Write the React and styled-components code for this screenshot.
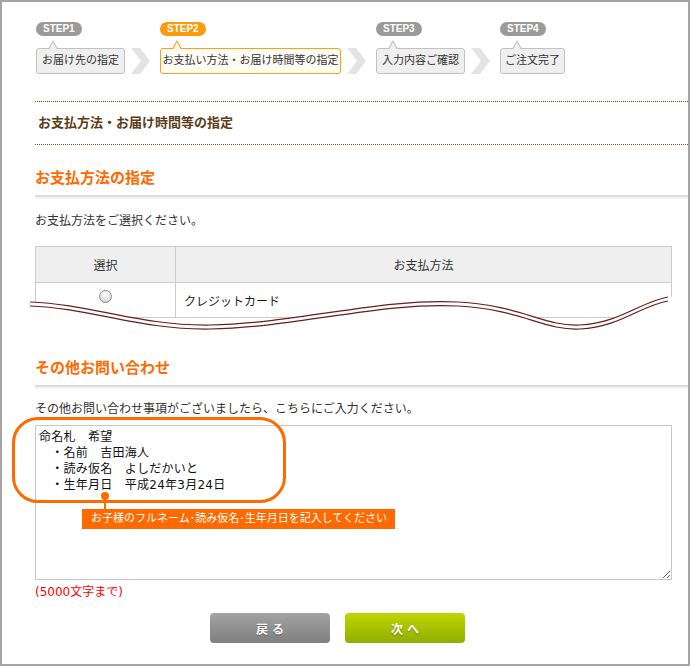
import React from "react";
import styled, { createGlobalStyle } from "styled-components";

const GlobalStyle = createGlobalStyle`
  body {
    margin: 0;
    font-family: "DejaVu Sans", "Noto Sans CJK JP", sans-serif;
    color: #333;
    background: #fff;
  }
`;

const steps = [
  { label: "STEP1", text: "お届け先の指定", width: 89 },
  { label: "STEP2", text: "お支払い方法・お届け時間等の指定", width: 181, active: true },
  { label: "STEP3", text: "入力内容ご確認", width: 89 },
  { label: "STEP4", text: "ご注文完了", width: 65 },
];

const noteText = "命名札　希望\n　・名前　吉田海人\n　・読み仮名　よしだかいと\n　・生年月日　平成24年3月24日";

function Chevron() {
  return (
    <ChevronBox>
      <svg width="19" height="26" viewBox="0 0 19 26">
        <polygon points="0,0 9,0 19,13 9,26 0,26 10,13" fill="#e3e3e3" />
      </svg>
    </ChevronBox>
  );
}

function Wave() {
  const upper = "M30,302 C90,304 140,326 210,325 C300,323 380,298 458,302 C520,305 545,327 580,325 C620,323 640,302 668,297";
  const lower = "M30,306 C90,308 140,330 210,329 C300,327 380,302 458,306 C520,309 545,331 580,329 C620,327 640,306 668,301";
  return (
    <WaveSvg width="650" height="50" viewBox="28 286 650 50">
      <path d={upper + " L678,296 L678,336 L28,336 Z"} fill="#fff" />
      <path d={upper} fill="none" stroke="#6b1c1c" strokeWidth="1.2" />
      <path d={lower} fill="none" stroke="#6b1c1c" strokeWidth="1.2" />
    </WaveSvg>
  );
}

export default function App() {
  return (
    <>
      <GlobalStyle />
      <Frame>
        <StepsRow>
          {steps.map((s, i) => (
            <React.Fragment key={s.label}>
              {i > 0 && <Chevron />}
              <Step>
                <Pill $active={s.active}>{s.label}</Pill>
                <StepBox $active={s.active} $width={s.width}>{s.text}</StepBox>
              </Step>
            </React.Fragment>
          ))}
        </StepsRow>

        <PageTitle>お支払方法・お届け時間等の指定</PageTitle>

        <SectionHeading>お支払方法の指定</SectionHeading>
        <Lead>お支払方法をご選択ください。</Lead>

        <TableWrap>
          <PayTable>
            <thead>
              <tr>
                <Th $w={139}>選択</Th>
                <Th>お支払方法</Th>
              </tr>
            </thead>
            <tbody>
              <tr>
                <Td $center>
                  <Radio />
                </Td>
                <Td>クレジットカード</Td>
              </tr>
            </tbody>
          </PayTable>
          <Wave />
        </TableWrap>

        <SectionHeading $top={39}>その他お問い合わせ</SectionHeading>
        <Lead $top={13}>その他お問い合わせ事項がございましたら、こちらにご入力ください。</Lead>

        <NoteWrap>
          <NoteArea readOnly value={noteText} />
          <Highlight />
          <Stem />
          <Dot />
          <Callout>お子様のフルネーム･読み仮名･生年月日を記入してください</Callout>
        </NoteWrap>
        <Limit>(5000文字まで)</Limit>

        <ButtonRow>
          <Button $variant="back">戻る</Button>
          <Button $variant="next">次へ</Button>
        </ButtonRow>
      </Frame>
    </>
  );
}

const Frame = styled.div`
  width: 690px;
  height: 666px;
  box-sizing: border-box;
  border: 2px solid #a4a4a4;
  padding: 20px 0 0 33px;
  overflow: hidden;
`;

const StepsRow = styled.div`
  display: flex;
  align-items: flex-end;
  margin-left: 1px;
`;

const Step = styled.div`
  display: flex;
  flex-direction: column;
  align-items: flex-start;
`;

const Pill = styled.div`
  height: 14px;
  line-height: 14px;
  padding: 0 7px;
  min-width: 31px;
  border-radius: 7px;
  background: ${(p) => (p.$active ? "#f99b0c" : "#9a9a9a")};
  color: #fff;
  font-family: "Liberation Sans", sans-serif;
  font-size: 10px;
  font-weight: bold;
  text-align: center;
  margin-bottom: 12px;
`;

const StepBox = styled.div`
  position: relative;
  width: ${(p) => p.$width}px;
  height: 26px;
  box-sizing: border-box;
  line-height: 24px;
  text-align: center;
  white-space: nowrap;
  font-size: 11px;
  color: #333;
  border: 1px solid ${(p) => (p.$active ? "#f7a21b" : "#c2c2c2")};
  border-radius: 3px;
  background: ${(p) => (p.$active ? "#fffcf3" : "#efefef")};

  &::before,
  &::after {
    content: "";
    position: absolute;
    left: 11px;
    width: 0;
    height: 0;
    border-style: solid;
  }
  &::before {
    top: -9px;
    border-width: 0 5px 9px 5px;
    border-color: transparent transparent ${(p) => (p.$active ? "#f7a21b" : "#c2c2c2")} transparent;
  }
  &::after {
    top: -7px;
    left: 12px;
    border-width: 0 4px 8px 4px;
    border-color: transparent transparent ${(p) => (p.$active ? "#fffcf3" : "#efefef")} transparent;
  }
`;

const ChevronBox = styled.div`
  height: 26px;
  margin: 0 10px 0 6px;
  display: flex;
`;

const PageTitle = styled.h1`
  margin: 27px 0 0 0;
  height: 42px;
  line-height: 42px;
  padding: 0 3px;
  border-top: 1px dotted #7b5526;
  border-bottom: 1px dotted #7b5526;
  font-size: 13px;
  font-weight: bold;
  color: #5c3c17;
`;

const SectionHeading = styled.h2`
  margin: ${(p) => p.$top ?? 22}px 0 0 0;
  padding-bottom: 6px;
  line-height: 22px;
  font-size: 15px;
  font-weight: bold;
  color: #ff6a00;
  border-bottom: 2px solid #dcdcdc;
  box-shadow: 0 2px 0 #f4f4f4;
`;

const Lead = styled.p`
  margin: ${(p) => p.$top ?? 15}px 0 0 0;
  line-height: 18px;
  font-size: 12px;
  color: #333;
`;

const TableWrap = styled.div`
  position: relative;
  width: 637px;
  margin: 16px 0 0 0;
`;

const PayTable = styled.table`
  width: 100%;
  border-collapse: collapse;
  table-layout: fixed;
  font-size: 12px;
`;

const Th = styled.th`
  width: ${(p) => (p.$w ? `${p.$w}px` : "auto")};
  height: 33px;
  padding: 1px 0;
  background: #efefef;
  border: 1px solid #cccccc;
  font-weight: normal;
  color: #333;
`;

const Td = styled.td`
  height: 34px;
  border: 1px solid #cccccc;
  padding: 0 8px;
  text-align: ${(p) => (p.$center ? "center" : "left")};
  color: #222;
`;

const Radio = styled.span`
  display: inline-block;
  width: 11px;
  height: 11px;
  border-radius: 50%;
  border: 1px solid #8c8c8c;
  background: radial-gradient(circle at 50% 35%, #ffffff 0%, #e6e6e6 55%, #bdbdbd 100%);
  vertical-align: middle;
  position: relative;
  top: -4px;
`;

const WaveSvg = styled.svg`
  position: absolute;
  left: -7px;
  top: 40px;
  overflow: visible;
`;

const NoteWrap = styled.div`
  position: relative;
  width: 637px;
  margin: 7px 0 0 0;
`;

const NoteArea = styled.textarea`
  display: block;
  width: 637px;
  height: 155px;
  box-sizing: border-box;
  margin: 0;
  padding: 3px;
  border: 1px solid #c8c8c8;
  font-family: "DejaVu Sans", "Noto Sans CJK JP", sans-serif;
  font-size: 12px;
  line-height: 16px;
  letter-spacing: 0.25px;
  color: #111;
  resize: both;
  outline: none;
`;

const Highlight = styled.div`
  position: absolute;
  left: -23px;
  top: -8px;
  width: 274px;
  height: 86px;
  box-sizing: border-box;
  border: 3px solid #ff6a00;
  border-radius: 26px;
  pointer-events: none;
`;

const Dot = styled.div`
  position: absolute;
  left: 66px;
  top: 67px;
  width: 8px;
  height: 8px;
  border-radius: 50%;
  background: #ff6a00;
`;

const Stem = styled.div`
  position: absolute;
  left: 69px;
  top: 71px;
  width: 2px;
  height: 14px;
  background: #ff6a00;
`;

const Callout = styled.div`
  position: absolute;
  left: 47px;
  top: 84px;
  height: 20px;
  line-height: 20px;
  padding: 0 8px 0 9px;
  background: #ff6a00;
  color: #fff;
  font-size: 11px;
  white-space: nowrap;
`;

const Limit = styled.p`
  margin: 3px 0 0 0;
  line-height: 18px;
  font-size: 12px;
  color: #f00;
`;

const Button = styled.button`
  width: 120px;
  height: 30px;
  border: none;
  border-radius: 4px;
  color: #fff;
  font-family: "Noto Sans CJK JP", sans-serif;
  font-size: 12px;
  font-weight: bold;
  letter-spacing: 4px;
  text-indent: 4px;
  text-shadow: 0 1px 1px rgba(0, 0, 0, 0.35);
  background: ${(p) =>
    p.$variant === "next"
      ? "linear-gradient(#bfd600, #8fae00)"
      : "linear-gradient(#a3a3a3, #7f7f7f)"};
  cursor: pointer;
`;

const ButtonRow = styled.div`
  display: flex;
  gap: 15px;
  margin: 12px 0 0 175px;
`;
